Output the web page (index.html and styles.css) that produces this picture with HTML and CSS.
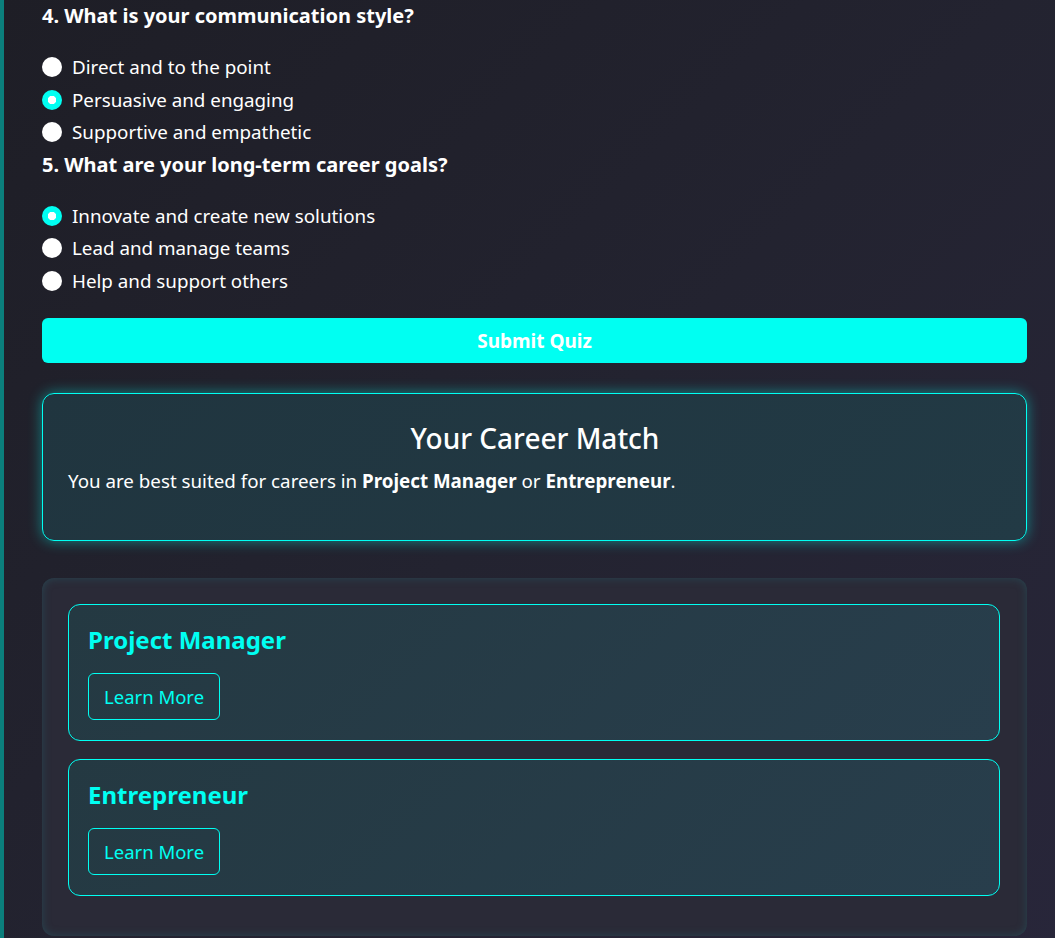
FILE: index.html
```html
<!DOCTYPE html>
<html lang="en">
<head>
<meta charset="utf-8">
<title>Career Quiz</title>
<link rel="stylesheet" href="styles.css">
</head>
<body>
<main class="quiz">
  <section class="question">
    <h3 class="q-title">4. What is your communication style?</h3>
    <label class="option"><input type="radio" name="q4"><span>Direct and to the point</span></label>
    <label class="option"><input type="radio" name="q4" checked><span>Persuasive and engaging</span></label>
    <label class="option"><input type="radio" name="q4"><span>Supportive and empathetic</span></label>
  </section>
  <section class="question">
    <h3 class="q-title">5. What are your long-term career goals?</h3>
    <label class="option"><input type="radio" name="q5" checked><span>Innovate and create new solutions</span></label>
    <label class="option"><input type="radio" name="q5"><span>Lead and manage teams</span></label>
    <label class="option"><input type="radio" name="q5"><span>Help and support others</span></label>
  </section>
  <button class="submit" type="button">Submit Quiz</button>

  <section class="result">
    <h2 class="result-title">Your Career Match</h2>
    <p class="result-text">You are best suited for careers in <strong>Project Manager</strong> or <strong>Entrepreneur</strong>.</p>
  </section>

  <section class="careers">
    <div class="career">
      <h3 class="career-title">Project Manager</h3>
      <button class="learn" type="button">Learn More</button>
    </div>
    <div class="career">
      <h3 class="career-title">Entrepreneur</h3>
      <button class="learn" type="button">Learn More</button>
    </div>
  </section>
</main>
</body>
</html>
```

FILE: styles.css
```css
html, body {
  margin: 0;
  padding: 0;
}
body {
  min-height: 100vh;
  background: linear-gradient(135deg, #1e1e26 0%, #232330 50%, #28263a 100%);
  color: #ffffff;
  font-family: "Noto Sans", "Open Sans", sans-serif;
}
.quiz {
  border-left: 4px solid #0b7f7c;
  padding: 0 28px 40px 38px;
  min-height: 100vh;
  box-sizing: border-box;
}
.question {
  display: flex;
  flex-direction: column;
}
.q-title {
  font-size: 20px;
  font-weight: 700;
  line-height: 28px;
  margin: 2px 0 21px;
}
.option {
  display: flex;
  align-items: center;
  gap: 10px;
  height: 32.5px;
  font-size: 18.8px;
}
.option input {
  appearance: none;
  -webkit-appearance: none;
  margin: 0;
  width: 20px;
  height: 20px;
  border-radius: 50%;
  background: #ffffff;
  flex: none;
}
.option input:checked {
  background: radial-gradient(circle, #ffffff 0 4px, #00fff2 4.5px);
}
.submit {
  display: block;
  width: 100%;
  height: 45px;
  margin-top: 21px;
  border: none;
  border-radius: 6px;
  background: #00fff2;
  color: #ffffff;
  font-family: inherit;
  font-size: 19px;
  font-weight: 700;
}
.result {
  margin-top: 30px;
  padding: 24px 24px 24px 25px;
  border: 1px solid #00fff2;
  border-radius: 12px;
  background: linear-gradient(135deg, #20353f, #223a45);
  box-shadow: 0 0 14px rgba(0, 255, 242, 0.45);
}
.result-title {
  margin: 2px 0 12px;
  text-align: center;
  font-size: 28px;
  font-weight: 500;
  line-height: 36px;
}
.result-text {
  margin: 0 0 23px;
  font-size: 18.75px;
  line-height: 25px;
}
.careers {
  margin-top: 37px;
  padding: 26px 27px 40px 26px;
  border-radius: 12px;
  background: #2a2a37;
  box-shadow: inset 0 0 8px rgba(40, 90, 100, 0.6);
  display: flex;
  flex-direction: column;
  gap: 18px;
}
.career {
  padding: 20px 19px;
  border: 1px solid #00fff2;
  border-radius: 12px;
  background: linear-gradient(135deg, #243942, #283e4c);
  display: flex;
  flex-direction: column;
  align-items: flex-start;
}
.career-title {
  margin: 0 0 19px;
  color: #00fff2;
  font-size: 24px;
  font-weight: 700;
  line-height: 29px;
}
.learn {
  padding: 10px 15px;
  border: 1px solid #00fff2;
  border-radius: 6px;
  background: transparent;
  color: #00fff2;
  font-family: inherit;
  font-size: 18.5px;
  line-height: 25px;
}
```
